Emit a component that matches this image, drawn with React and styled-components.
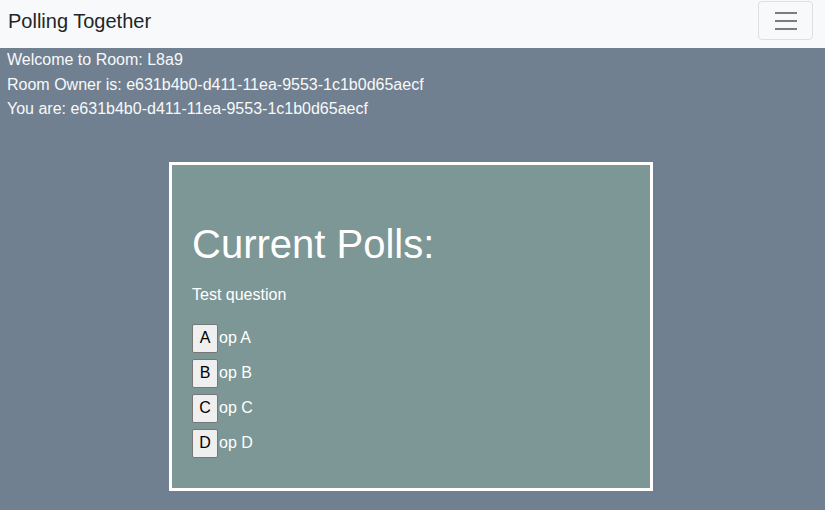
import React from "react";
import styled, { createGlobalStyle } from "styled-components";

const GlobalStyle = createGlobalStyle`
  html, body {
    margin: 0;
    padding: 0;
    background: #708090;
  }
  body {
    font-family: "Liberation Sans", Arial, sans-serif;
    font-size: 16px;
    line-height: 1.5;
    color: #f8f9fa;
  }
`;

const Page = styled.div`
  min-height: 510px;
  background: #708090;
`;

const Navbar = styled.nav`
  height: 48px;
  background: #f8f9fa;
  display: flex;
  align-items: flex-start;
  justify-content: space-between;
  padding: 0 12px 0 8px;
`;

const Brand = styled.a`
  color: #212529;
  font-size: 20px;
  line-height: 30px;
  margin-top: 6px;
  text-decoration: none;
`;

const Toggler = styled.button`
  width: 55px;
  height: 39px;
  margin-top: 1px;
  background: transparent;
  border: 1px solid rgba(0, 0, 0, 0.1);
  border-radius: 4px;
  display: flex;
  align-items: center;
  justify-content: center;
  padding: 0;
  cursor: pointer;
`;

const Info = styled.div`
  padding: 0 7px;
  line-height: 24.5px;
`;

const PollBox = styled.section`
  width: 484px;
  box-sizing: border-box;
  margin: 40px auto 0 169px;
  border: 3px solid #ffffff;
  background: #7d9696;
  padding: 55px 20px 30px;
`;

const Heading = styled.h1`
  margin: 0;
  font-size: 40px;
  font-weight: 400;
  line-height: 48px;
  color: #ffffff;
`;

const Question = styled.p`
  margin: 15px 0 17px;
  line-height: 24px;
  color: #ffffff;
`;

const Options = styled.div`
  display: flex;
  flex-direction: column;
  gap: 6px;
`;

const Option = styled.div`
  display: flex;
  align-items: center;
  color: #ffffff;
`;

const Vote = styled.button`
  height: 29px;
  min-width: 26px;
  padding: 0 5px;
  margin-right: 1px;
  font-family: "Liberation Sans", Arial, sans-serif;
  font-size: 16px;
  color: #000000;
  background: #efefef;
  border: 1px solid #767676;
  border-radius: 2px;
  cursor: pointer;
`;

const MenuIcon = () => (
  <svg width="30" height="30" viewBox="0 0 30 30">
    <path
      d="M4 7h22M4 15h22M4 23h22"
      stroke="rgba(0,0,0,0.5)"
      strokeWidth="2"
      strokeLinecap="butt"
    />
  </svg>
);

const options = ["A", "B", "C", "D"];

export default function App() {
  const id = "e631b4b0-d411-11ea-9553-1c1b0d65aecf";
  return (
    <Page>
      <GlobalStyle />
      <Navbar>
        <Brand href="#">Polling Together</Brand>
        <Toggler aria-label="Toggle navigation">
          <MenuIcon />
        </Toggler>
      </Navbar>
      <Info>
        <div>Welcome to Room: L8a9</div>
        <div>Room Owner is: {id}</div>
        <div>You are: {id}</div>
      </Info>
      <PollBox>
        <Heading>Current Polls:</Heading>
        <Question>Test question</Question>
        <Options>
          {options.map((o) => (
            <Option key={o}>
              <Vote>{o}</Vote>
              op {o}
            </Option>
          ))}
        </Options>
      </PollBox>
    </Page>
  );
}
